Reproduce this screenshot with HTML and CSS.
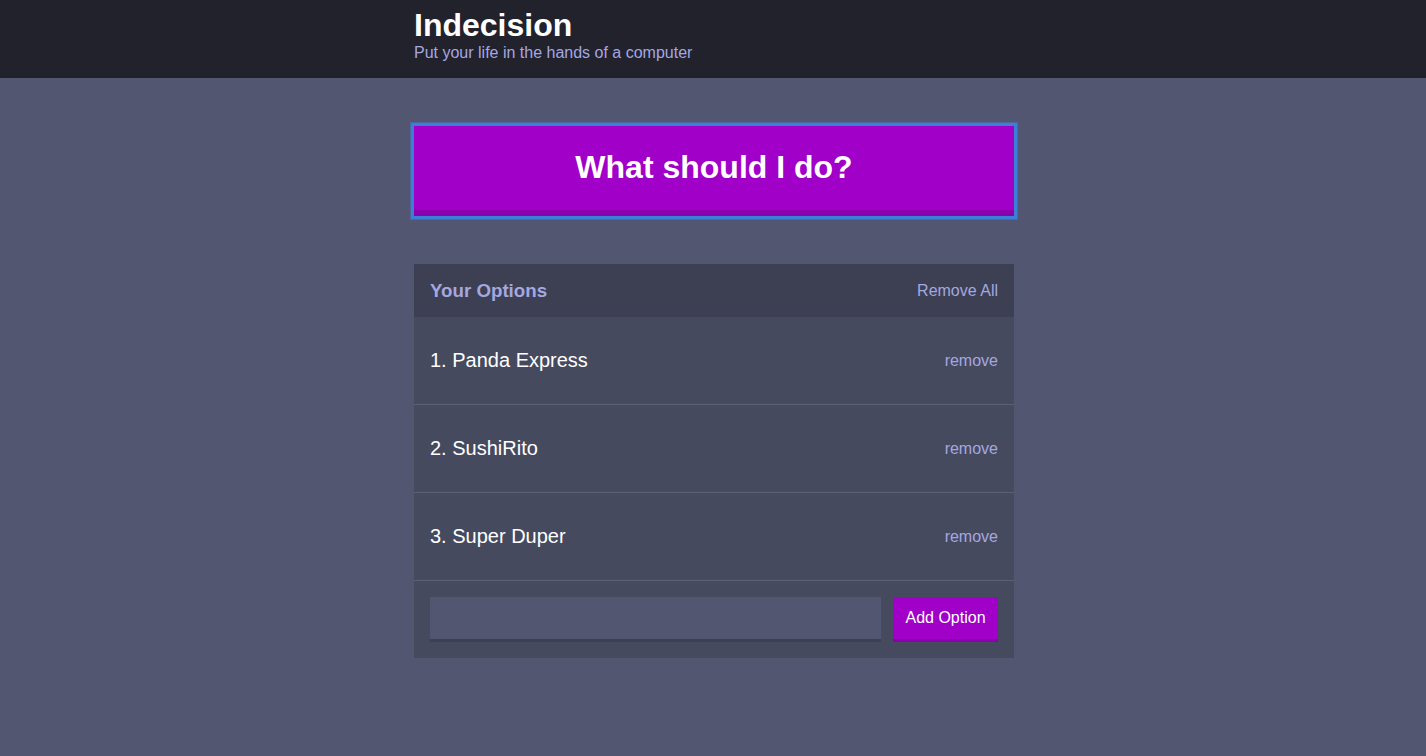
FILE: index.html
```html
<!DOCTYPE html>
<html lang="en">
<head>
<meta charset="utf-8">
<title>Indecision</title>
<link rel="stylesheet" href="styles.css">
</head>
<body>
<header class="header">
  <div class="container">
    <h1 class="header__title">Indecision</h1>
    <h2 class="header__subtitle">Put your life in the hands of a computer</h2>
  </div>
</header>
<main class="container">
  <button class="big-button">What should I do?</button>
  <div class="widget">
    <div class="widget-header">
      <h3 class="widget-header__title">Your Options</h3>
      <button class="button--link">Remove All</button>
    </div>
    <div class="option">
      <p class="option__text">1. Panda Express</p>
      <button class="button--link">remove</button>
    </div>
    <div class="option">
      <p class="option__text">2. SushiRito</p>
      <button class="button--link">remove</button>
    </div>
    <div class="option">
      <p class="option__text">3. Super Duper</p>
      <button class="button--link">remove</button>
    </div>
    <form class="add-option">
      <input class="add-option__input" type="text" name="option">
      <button class="button" type="button">Add Option</button>
    </form>
  </div>
</main>
</body>
</html>
```

FILE: styles.css
```css
* { box-sizing: border-box; }

html, body { height: 100%; }

body {
  margin: 0;
  background: #525671;
  font-family: "Liberation Sans", Arial, Helvetica, sans-serif;
  font-size: 16px;
  color: #ffffff;
}

.container {
  width: 602px;
  padding-left: 2px;
  margin: 0 auto;
}

.header {
  background: #21222c;
  padding: 9px 0 16px;
  margin-bottom: 48px;
}

.header__title {
  margin: 0;
  font-size: 32px;
  line-height: 32px;
  font-weight: bold;
  color: #ffffff;
}

.header__subtitle {
  margin: 2px 0 0;
  font-size: 16px;
  line-height: 19px;
  font-weight: normal;
  color: #a5a7e0;
}

.big-button {
  display: block;
  width: 100%;
  background: #a000c8;
  border: none;
  border-bottom: 6px solid #8a00ad;
  color: #ffffff;
  font-family: inherit;
  font-weight: bold;
  font-size: 32px;
  line-height: 37px;
  padding: 23px 24px 24px;
  margin-bottom: 48px;
  box-shadow: 0 0 0 3px #3d7fd6, 0 0 1px 4px rgba(61, 127, 214, 0.45);
}

.widget {
  background: #464a5f;
}

.widget-header {
  background: #3c4052;
  display: flex;
  justify-content: space-between;
  align-items: center;
  padding: 16px;
}

.widget-header__title {
  margin: 0;
  font-size: 18.72px;
  line-height: 21px;
  font-weight: bold;
  color: #a5a7e0;
}

.button--link {
  background: none;
  border: none;
  padding: 0;
  font-family: inherit;
  font-size: 16px;
  color: #a5a7e0;
}

.option {
  display: flex;
  justify-content: space-between;
  align-items: center;
  padding: 0 16px;
  height: 88px;
  border-bottom: 1px solid #5b5f78;
}

.option__text {
  margin: 0;
  font-size: 20px;
  color: #ffffff;
}

.add-option {
  display: flex;
  gap: 12px;
  padding: 16px;
  margin: 0;
}

.add-option__input {
  flex-grow: 1;
  background: #525671;
  border: none;
  border-bottom: 3px solid #3c4052;
  color: #a5a7e0;
  padding: 12px;
  font-family: inherit;
  font-size: 16px;
}

.button {
  background: #a000c8;
  border: none;
  border-bottom: 3px solid #8a00ad;
  color: #ffffff;
  font-family: inherit;
  font-size: 16px;
  padding: 12px;
  width: 105px;
}
```
